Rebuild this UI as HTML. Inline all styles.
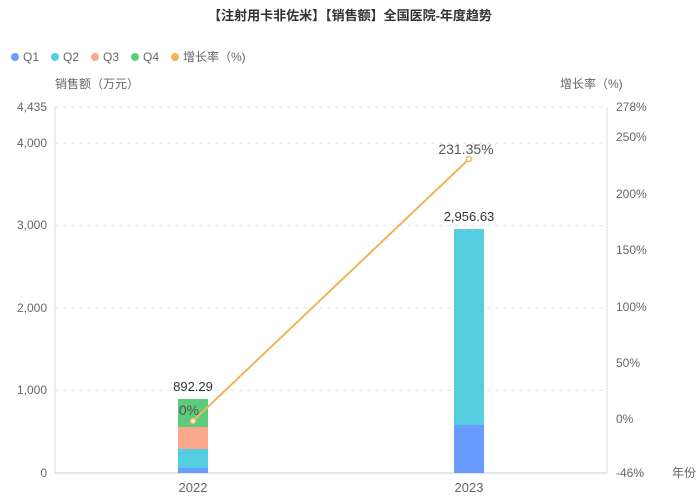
<html><head><style>body{margin:0;background:#fff}svg text{font-family:"Liberation Sans","Noto Sans CJK SC",sans-serif}</style></head><body>
<svg width="700" height="503" xmlns="http://www.w3.org/2000/svg">
<text x="350" y="20" text-anchor="middle" font-size="13" font-weight="bold" fill="#333">【注射用卡非佐米】【销售额】全国医院-年度趋势</text>
<g font-size="12" fill="#666">
<circle cx="15" cy="57" r="4" fill="#6a9cff"/><text x="23" y="61">Q1</text>
<circle cx="55" cy="57" r="4" fill="#55cfe0"/><text x="63" y="61">Q2</text>
<circle cx="95" cy="57" r="4" fill="#fba98d"/><text x="103" y="61">Q3</text>
<circle cx="135" cy="57" r="4" fill="#5ccc7c"/><text x="143" y="61">Q4</text>
<circle cx="175" cy="57" r="4" fill="#f0b55a"/><text x="183" y="61">增长率（%)</text>
<text x="55" y="88">销售额（万元）</text>
<text x="560" y="88">增长率（%)</text>
</g>
<g stroke="#e0e6f1" stroke-dasharray="4,4">
<line x1="55" y1="107" x2="607" y2="107"/><line x1="55" y1="143" x2="607" y2="143"/><line x1="55" y1="225.5" x2="607" y2="225.5"/><line x1="55" y1="308" x2="607" y2="308"/><line x1="55" y1="390.5" x2="607" y2="390.5"/>
</g>
<line x1="55" y1="107" x2="55" y2="473" stroke="#ddd"/>
<line x1="607" y1="107" x2="607" y2="473" stroke="#ddd"/>
<line x1="55" y1="473" x2="607" y2="473" stroke="#ccc"/>
<g font-size="12" fill="#666" text-anchor="end">
<text x="47" y="111">4,435</text><text x="47" y="147">4,000</text><text x="47" y="229">3,000</text><text x="47" y="312">2,000</text><text x="47" y="394">1,000</text><text x="47" y="477">0</text>
</g>
<g font-size="12" fill="#666">
<text x="616" y="111">278%</text><text x="616" y="141">250%</text><text x="616" y="198">200%</text><text x="616" y="254">150%</text><text x="616" y="311">100%</text><text x="616" y="367">50%</text><text x="616" y="423">0%</text><text x="616" y="477">-46%</text><text x="672" y="477">年份</text>
<text x="193" y="492" text-anchor="middle" font-size="13">2022</text><text x="469" y="492" text-anchor="middle" font-size="13">2023</text>
</g>
<rect x="178" y="468" width="30" height="5" fill="#6a9cff"/>
<rect x="178" y="449" width="30" height="19" fill="#55cfe0"/>
<rect x="178" y="427" width="30" height="22" fill="#fba98d"/>
<rect x="178" y="399" width="30" height="28" fill="#5ccc7c"/>
<rect x="454" y="425" width="30" height="48" fill="#6a9cff"/>
<rect x="454" y="229" width="30" height="196" fill="#55cfe0"/>
<text x="193" y="391" text-anchor="middle" font-size="13" fill="#333">892.29</text>
<text x="469" y="221" text-anchor="middle" font-size="13" fill="#333">2,956.63</text>
<line x1="193" y1="421" x2="469" y2="159" stroke="#f0b55a" stroke-width="2"/>
<circle cx="193" cy="421" r="2.5" fill="#fff" stroke="#f0b55a" stroke-width="1.5"/>
<circle cx="469" cy="159" r="2.5" fill="#fff" stroke="#f0b55a" stroke-width="1.5"/>
<text x="189" y="415" text-anchor="middle" font-size="14" fill="#555">0%</text>
<text x="466" y="154" text-anchor="middle" font-size="14" fill="#555">231.35%</text>
</svg>
</body></html>
